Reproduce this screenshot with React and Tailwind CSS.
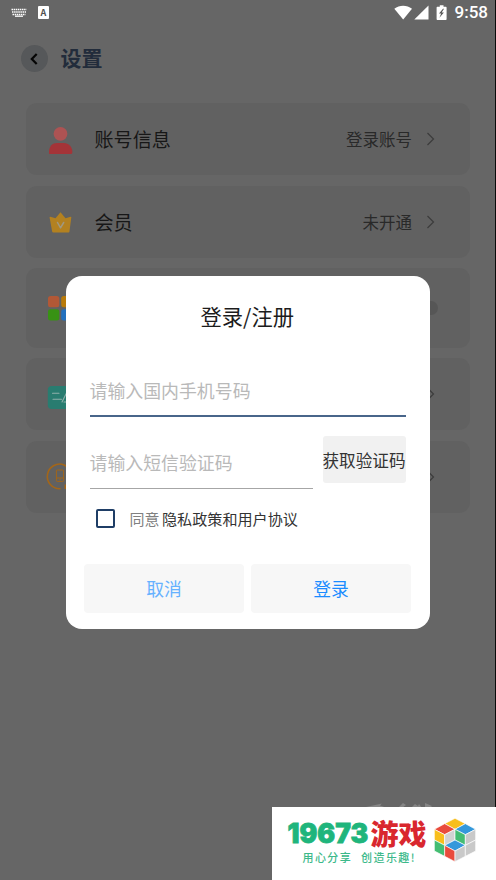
const UserIcon = () => (
  <svg className="h-8 w-8" viewBox="0 0 32 32">
    <circle cx="16.5" cy="10.8" r="6.9" fill="#ad5353" />
    <path d="M5 30v-1.2C5 23.4 8.5 20 13 20h7c4.5 0 8.3 3.8 8.3 8.6v1.2c0 .7-.5 1.2-1.2 1.2H6c-.6 0-1-.4-1-1z" fill="#a43438" />
  </svg>
)

const CrownIcon = () => (
  <svg className="h-8 w-8" viewBox="0 0 32 32">
    <path
      d="M16.5 6.3 21.5 12.2 26.7 10.7Q27.4 10.6 27.3 11.4L25.4 25.8Q25.3 26.6 24.5 26.6H9.2Q8.4 26.6 8.2 25.8L5.6 11.4Q5.5 10.6 6.3 10.7L11.500 12.2Z"
      fill="#b38120"
    />
    <path d="m13.5 16.5 3 5.300 3.200-5.300" fill="none" stroke="#a09880" strokeWidth="1.5" strokeLinecap="round" strokeLinejoin="round" />
  </svg>
)

const GridIcon = () => (
  <svg className="h-8 w-8" viewBox="0 0 32 32">
    <rect x="4" y="4" width="11.3" height="11.3" rx="2.5" fill="#b25836" />
    <rect x="17.2" y="4" width="11.3" height="11.3" rx="2.5" fill="#b87a0a" />
    <rect x="4" y="17.3" width="11.3" height="11.3" rx="2.5" fill="#389214" />
    <rect x="17.2" y="17.3" width="11.3" height="11.3" rx="2.5" fill="#2270be" />
  </svg>
)

const FeedbackIcon = () => (
  <svg className="h-8 w-8" viewBox="0 0 32 32">
    <rect x="3.8" y="8" width="25" height="23" rx="4" fill="#297c70" />
    <path d="M8.5 15.3h6.5M9 21.3h8.5M18 24l4.500-9M20 24h6" fill="none" stroke="#8fb0aa" strokeWidth="1.1" strokeLinecap="round" />
  </svg>
)

const PhoneIcon = () => (
  <svg className="h-8 w-8" viewBox="0 0 32 32">
    <g fill="none" stroke="#a46618">
      <path d="M16 27.7A12.3 12.3 0 1 1 26 22" strokeWidth="1.6" strokeLinecap="round" />
      <path d="M21.5 23.5v4.500" strokeWidth="2" />
      <rect x="12.4" y="9" width="7.2" height="11.4" rx=".8" strokeWidth="1" />
      <path d="M12.4 17h7.2M15.3 18.8h1.4" strokeWidth="1" />
    </g>
  </svg>
)

const Chevron = () => (
  <svg className="h-4 w-2.5" viewBox="0 0 10 16" fill="none" stroke="#3c3c3c" strokeWidth="1.2">
    <path d="m1.5 2 6 6-6 6" />
  </svg>
)

const KeyboardIcon = () => (
  <svg className="h-[10px] w-4" viewBox="0 0 16 10" fill="none" stroke="#fff">
    <path d="M.5 1.5h15M1 4h14M1.5 6.4h13" strokeWidth="1.5" strokeDasharray="1.5 .6" />
    <path d="M4 8.2h8" strokeWidth="1.3" />
  </svg>
)

const StatusBar = () => (
  <div className="flex h-[26px] items-center pb-px pl-[11px] pr-[9px]">
    <KeyboardIcon />
    <div className="ml-[11px] flex h-[13px] w-[11px] items-center justify-center rounded-[1px] bg-white text-[9px] font-bold leading-none text-[#505050]">
      A
    </div>
    <svg className="ml-auto h-[15px] w-[54px]" viewBox="0 0 54 15" fill="#fff">
      <path d="M.3 3.7C5.5-.4 12.8-.4 18 3.7L9.2 14.5z" />
      <path d="M34.5.5v14H20.3z" />
      <path d="M45.8.2h3.700v1.500h2.100c.6 0 1 .4 1 1v11.300c0 .6-.4 1-1 1h-8c-.6 0-1-.4-1-1V2.700c0-.6.4-1 1-1h2.200z" />
      <path d="M49 3.8l-4 4.600h2.200l-1.800 4.300 4.500-5.100h-2.200l2.300-3.800z" fill="#555" />
    </svg>
    <span className="-mr-px ml-[7px] font-['Roboto'] text-[17px] font-medium leading-none text-white">9:58</span>
  </div>
)

const rows = [
  { id: 'account', label: '账号信息', value: '登录账号', icon: UserIcon, size: 'mt-0 h-[72px]' },
  { id: 'vip', label: '会员', value: '未开通', icon: CrownIcon, size: 'mt-[11px] h-[72px]' },
  { id: 'widgets', icon: GridIcon, toggle: true, size: 'mt-[10px] h-[80px]' },
  { id: 'feedback', icon: FeedbackIcon, size: 'mt-[10px] h-[72px]' },
  { id: 'phone', icon: PhoneIcon, size: 'mt-[11px] h-[72px]' },
]

const SettingRow = ({ row }) => {
  const Icon = row.icon
  return (
    <div className={`flex items-center rounded-[11px] bg-[#616161] pl-[18px] pr-[34px] ${row.size}`}>
      <Icon />
      <span className="ml-[18.5px] pb-px text-[19.1px] leading-[20px] text-[#171717]">{row.label}</span>
      <span className="ml-auto mr-[14px] text-[16.5px] leading-none text-[#292929]">{row.value}</span>
      {row.toggle ? (
        <div className="-mr-[2px] h-[14px] w-7 rounded-full bg-[#565656]" />
      ) : (
        <Chevron />
      )}
    </div>
  )
}

const LoginDialog = () => (
  <div className="absolute left-[65.5px] top-[275.5px] h-[353.5px] w-[364.5px] rounded-[16px] bg-white px-[18.5px] pt-[26px]">
    <h2 className="-ml-px text-center text-[21.3px] leading-[28px] text-[#1c1c1c]">登录/注册</h2>

    <div className="px-[6px]">
      <div className="-ml-[0.5px] mt-[39.5px] flex h-[48px] items-center border-b-2 border-[#48658a] pb-[4px] text-[17.9px] text-[#b9b9b9]">
        请输入国内手机号码
      </div>

      <div className="mt-[19px] flex">
        <div className="-ml-[0.5px] flex h-[53px] w-[223.5px] items-center border-b border-[#a6a6a6] text-[17.9px] text-[#b9b9b9]">
          请输入短信验证码
        </div>
        <button className="ml-[10px] h-[47px] w-[83px] whitespace-nowrap rounded-[3px] bg-[#f1f1f1] pt-px text-[16.6px] text-[#333]">
          获取验证码
        </button>
      </div>

      <div className="mt-[19.5px] flex h-[20px] items-center pl-[6px]">
        <div className="h-[19px] w-[19px] rounded-[2px] border-2 border-[#1f3e66]" />
        <span className="ml-[14.5px] text-[15px] leading-none text-[#808080]">同意</span>
        <span className="ml-[2.5px] text-[15.1px] leading-none text-[#333]">隐私政策和用户协议</span>
      </div>
    </div>

    <div className="mt-[35px] flex gap-[7px]">
      <button className="h-[49px] w-[160px] rounded-[4px] bg-[#f7f7f7] text-[17.8px] text-[#66b1ff]">取消</button>
      <button className="h-[49px] w-[160px] rounded-[4px] bg-[#f7f7f7] text-[17.8px] text-[#1a8cff]">登录</button>
    </div>
  </div>
)

const CubeLogo = () => (
  <svg className="h-11 w-[42px]" viewBox="512 84 126 132" stroke="#fff" strokeWidth="2" strokeLinejoin="round">
    <path d="M575 85l31 16-31 17-31-17z" fill="#f8be1c" />
    <path d="M544 101l31 17-31 16-31-16z" fill="#e94b3c" />
    <path d="M606 101l31 17-31 16-31-16z" fill="#3498db" />
    <path d="M513 118l31 16v32l-31-16z" fill="#f8be1c" />
    <path d="M575 118l-31 16v32l31-16z" fill="#d2d2d2" />
    <path d="M575 118l31 16v32l-31-16z" fill="#44bd72" />
    <path d="M637 118l-31 16v32l31-16z" fill="#c9c9c9" />
    <path d="M575 150l31 16-31 17-31-17z" fill="#3498db" />
    <path d="M513 150l31 16v33l-31-16z" fill="#44bd72" />
    <path d="M544 166l31 17v32l-31-16z" fill="#e94b3c" />
    <path d="M606 166l-31 17v32l31-16z" fill="#c9c9c9" />
    <path d="M637 150l-31 16v33l31-16z" fill="#c9c9c9" />
  </svg>
)

const SiteBadge = () => (
  <>
    <svg className="absolute left-[366px] top-[802px] h-[6px] w-[68px]" viewBox="0 0 68 6" fill="#858585">
      <path d="M0 5 16 1.5 14 3.5 21 6H2zM33 5l4-4 3 2-4 3zM45 6l4-4 3 2 1-2 3 4zM59 1l7 3-2 2-5-1z" />
    </svg>
    <div className="absolute left-[271.5px] top-[806.5px] flex h-[73.5px] w-[224.5px] bg-white pl-[15px]">
      <div className="w-[142px] pt-[11px]">
        <div className="flex items-center whitespace-nowrap leading-[30px]">
          <span className="w-[84px] pl-px font-['Inter'] text-[26.5px] font-black text-[#1fb57c] [-webkit-text-stroke:0.8px_#1fb57c]">
            19673
          </span>
          <span className="text-[28px] font-black text-[#d9272e]">游戏</span>
        </div>
        <div className="mt-[3px] flex gap-[9px] whitespace-nowrap pl-[16px] text-[11px] font-medium leading-[12px] tracking-[1.4px] text-[#3cb98a]">
          <span>用心分享</span>
          <span>创造乐趣!</span>
        </div>
      </div>
      <div className="ml-[5.5px] pt-[11px]">
        <CubeLogo />
      </div>
    </div>
  </>
)

const App = () => {
  return (
    <div className="relative h-[880px] w-[496px] overflow-hidden bg-[#666] font-['Noto_Sans_CJK_SC',sans-serif] shadow-[inset_-1px_0_0_#0a0a0a]">
      <StatusBar />

      <header className="flex h-[65px] items-center pl-[20.5px]">
        <div className="flex h-[27px] w-[27px] items-center justify-center rounded-full bg-[#56585a]">
          <svg className="mr-px h-3 w-2" viewBox="0 0 8 12" fill="none" stroke="#050505" strokeWidth="2.2">
            <path d="M6.7 1 1.8 6l4.9 5" />
          </svg>
        </div>
        <h1 className="ml-[13px] pb-[2px] text-[21px] font-bold leading-none text-[#222c3b]">设置</h1>
      </header>

      <main className="px-[26px] pt-[12px]">
        {rows.map((row) => (
          <SettingRow key={row.id} row={row} />
        ))}
      </main>

      <LoginDialog />
      <SiteBadge />
    </div>
  )
}

export default App
